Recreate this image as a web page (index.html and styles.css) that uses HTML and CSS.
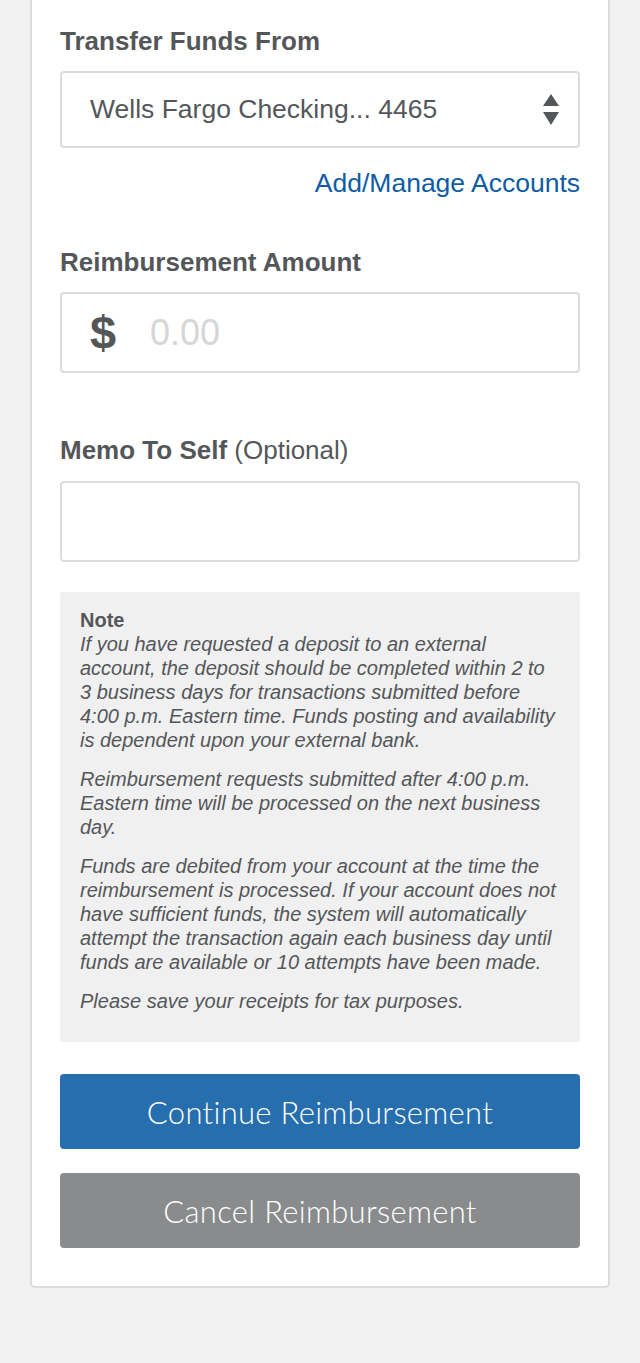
FILE: index.html
```html
<!DOCTYPE html>
<html>
<head>
<meta charset="utf-8">
<link rel="stylesheet" href="styles.css">
</head>
<body>
<div class="page">
  <div class="card">
    <div class="label">Transfer Funds From</div>
    <div class="field select">
      <span class="select-text">Wells Fargo Checking... 4465</span>
      <svg class="arrows" width="16" height="32" viewBox="0 0 16 32">
        <polygon points="8,0 16,12 0,12" fill="#54575a"/>
        <polygon points="0,18 16,18 8,31" fill="#54575a"/>
      </svg>
    </div>
    <div class="link-row"><a class="link">Add/Manage Accounts</a></div>

    <div class="label label-amount">Reimbursement Amount</div>
    <div class="field amount">
      <span class="dollar">$</span>
      <span class="placeholder">0.00</span>
    </div>

    <div class="label label-memo">Memo To Self <span class="opt">(Optional)</span></div>
    <div class="field memo"></div>

    <div class="note">
      <div class="note-title">Note</div>
      <p>If you have requested a deposit to an external account, the deposit should be completed within 2 to 3&nbsp;business days for transactions submitted before 4:00&nbsp;p.m. Eastern time. Funds posting and availability is dependent upon your external bank.</p>
      <p>Reimbursement requests submitted after 4:00 p.m. Eastern time will be processed on the next business day.</p>
      <p>Funds are debited from your account at the time the reimbursement is processed. If your account does not have sufficient funds, the system will automatically attempt the transaction again each business day until funds are available or 10 attempts have been made.</p>
      <p>Please save your receipts for tax purposes.</p>
    </div>

    <div class="btn btn-primary">Continue Reimbursement</div>
    <div class="btn btn-secondary">Cancel Reimbursement</div>
  </div>
</div>
</body>
</html>
```

FILE: styles.css
```css
html, body {
  margin: 0;
  padding: 0;
  background: #f2f2f2;
}
body {
  font-family: "Liberation Sans", Arial, sans-serif;
  color: #54575a;
}
.page {
  padding: 0 30px 0 30px;
  height: 1363px;
  box-sizing: border-box;
}
.card {
  background: #fff;
  border: 2px solid #dcdcdc;
  border-top: 0;
  border-radius: 0 0 5px 5px;
  padding: 27px 28px 38px 28px;
}
.label {
  font-size: 26px;
  line-height: 28px;
  font-weight: bold;
  color: #54575a;
}
.label-amount { margin-top: 51px; }
.label-memo { margin-top: 63px; }
.opt { font-weight: normal; }
.field {
  border: 2px solid #dcdcdc;
  border-radius: 4px;
  box-sizing: border-box;
  background: #fff;
}
.select {
  margin-top: 16px;
  height: 77px;
  display: flex;
  align-items: center;
  justify-content: space-between;
  padding: 0 19px 0 28px;
}
.select-text {
  font-size: 26.5px;
  color: #54575a;
}
.arrows { display: block; }
.link-row {
  margin-top: 21px;
  display: flex;
  justify-content: flex-end;
}
.link {
  font-size: 26.5px;
  line-height: 28px;
  color: #0f5ca4;
}
.amount {
  margin-top: 16px;
  height: 81px;
  display: flex;
  align-items: center;
  padding: 0 0 0 28px;
}
.dollar {
  font-size: 47px;
  font-weight: bold;
  color: #54575a;
  width: 60px;
}
.placeholder {
  font-size: 36px;
  color: #d6d6d6;
}
.memo {
  margin-top: 17px;
  height: 81px;
}
.note {
  margin-top: 30px;
  background: #f0f0f0;
  border-radius: 3px;
  padding: 16px 14px 29px 20px;
  font-size: 20px;
  line-height: 24px;
  color: #54575a;
}
.note-title {
  font-weight: bold;
}
.note p {
  margin: 0;
  font-style: italic;
}
.note p + p {
  margin-top: 15px;
}
.btn {
  height: 75px;
  border-radius: 4px;
  display: flex;
  align-items: center;
  justify-content: center;
  color: #fff;
  font-family: Lato, "Noto Sans", sans-serif;
  font-weight: 300;
  font-size: 31px;
  letter-spacing: 0.3px;
}
.btn-primary {
  margin-top: 32px;
  background: #276eae;
}
.btn-secondary {
  margin-top: 24px;
  background: #898b8c;
}
```
